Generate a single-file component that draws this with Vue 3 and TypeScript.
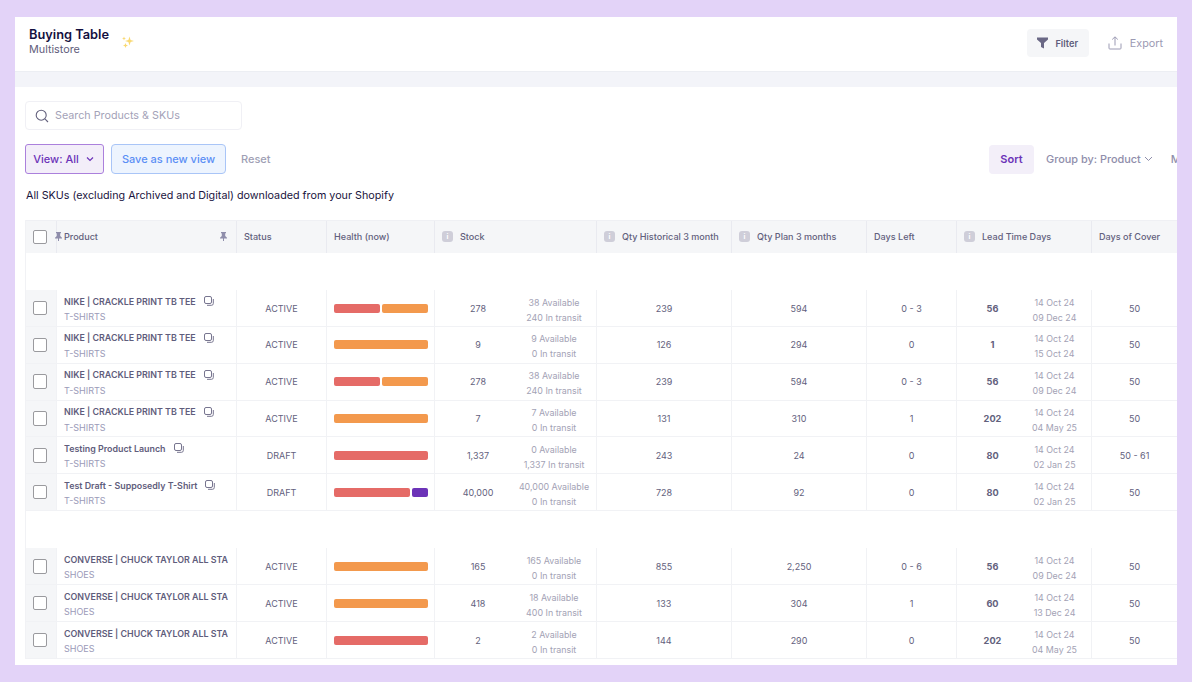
<script setup lang="ts">
interface Row {
  name: string; cat: string; copy: boolean; status: string; bars: { c: string; f: number }[];
  stock: string; avail: string; transit: string; hist: string; plan: string; left: string;
  lead: string; d1: string; d2: string; cover: string;
}
const R = '#e56b67', O = '#f3994d', P = '#6c33b8'
const nike = 'NIKE | CRACKLE PRINT TB TEE'
const conv = 'CONVERSE | CHUCK TAYLOR ALL STA'
const groups: Row[][] = [
  [
    { name: nike, cat: 'T-SHIRTS', copy: true, status: 'ACTIVE', bars: [{ c: R, f: 1 }, { c: O, f: 1 }], stock: '278', avail: '38 Available', transit: '240 In transit', hist: '239', plan: '594', left: '0 - 3', lead: '56', d1: '14 Oct 24', d2: '09 Dec 24', cover: '50' },
    { name: nike, cat: 'T-SHIRTS', copy: true, status: 'ACTIVE', bars: [{ c: O, f: 1 }], stock: '9', avail: '9 Available', transit: '0 In transit', hist: '126', plan: '294', left: '0', lead: '1', d1: '14 Oct 24', d2: '15 Oct 24', cover: '50' },
    { name: nike, cat: 'T-SHIRTS', copy: true, status: 'ACTIVE', bars: [{ c: R, f: 1 }, { c: O, f: 1 }], stock: '278', avail: '38 Available', transit: '240 In transit', hist: '239', plan: '594', left: '0 - 3', lead: '56', d1: '14 Oct 24', d2: '09 Dec 24', cover: '50' },
    { name: nike, cat: 'T-SHIRTS', copy: true, status: 'ACTIVE', bars: [{ c: O, f: 1 }], stock: '7', avail: '7 Available', transit: '0 In transit', hist: '131', plan: '310', left: '1', lead: '202', d1: '14 Oct 24', d2: '04 May 25', cover: '50' },
    { name: 'Testing Product Launch', cat: 'T-SHIRTS', copy: true, status: 'DRAFT', bars: [{ c: R, f: 1 }], stock: '1,337', avail: '0 Available', transit: '1,337 In transit', hist: '243', plan: '24', left: '0', lead: '80', d1: '14 Oct 24', d2: '02 Jan 25', cover: '50 - 61' },
    { name: 'Test Draft - Supposedly T-Shirt', cat: 'T-SHIRTS', copy: true, status: 'DRAFT', bars: [{ c: R, f: 5 }, { c: P, f: 1 }], stock: '40,000', avail: '40,000 Available', transit: '0 In transit', hist: '728', plan: '92', left: '0', lead: '80', d1: '14 Oct 24', d2: '02 Jan 25', cover: '50' },
  ],
  [
    { name: conv, cat: 'SHOES', copy: false, status: 'ACTIVE', bars: [{ c: O, f: 1 }], stock: '165', avail: '165 Available', transit: '0 In transit', hist: '855', plan: '2,250', left: '0 - 6', lead: '56', d1: '14 Oct 24', d2: '09 Dec 24', cover: '50' },
    { name: conv, cat: 'SHOES', copy: false, status: 'ACTIVE', bars: [{ c: O, f: 1 }], stock: '418', avail: '18 Available', transit: '400 In transit', hist: '133', plan: '304', left: '1', lead: '60', d1: '14 Oct 24', d2: '13 Dec 24', cover: '50' },
    { name: conv, cat: 'SHOES', copy: false, status: 'ACTIVE', bars: [{ c: R, f: 1 }], stock: '2', avail: '2 Available', transit: '0 In transit', hist: '144', plan: '290', left: '0', lead: '202', d1: '14 Oct 24', d2: '04 May 25', cover: '50' },
  ],
]
</script>

<template>
  <div class="page">
    <div class="frame">
      <header class="top">
        <div class="title-wrap">
          <div>
            <div class="title">Buying Table</div>
            <div class="subtitle">Multistore</div>
          </div>
          <svg class="sparkle" width="14" height="14" viewBox="0 0 14 14" fill="#f9d973">
            <path d="M8.5 1.500 9.600 4.900 13 6 9.600 7.100 8.500 10.500 7.400 7.100 4 6 7.400 4.900Z" />
            <path d="M3 1.500 3.600 2.900 5 3.500 3.600 4.100 3 5.500 2.400 4.100 1 3.500 2.400 2.900Z" />
            <path d="M4.500 8 5.200 9.800 7 10.500 5.200 11.200 4.500 13 3.800 11.200 2 10.500 3.800 9.800Z" />
          </svg>
        </div>
        <div class="top-actions">
          <button class="filter">
            <svg width="11" height="12" viewBox="0 0 11 12" fill="#6a6885"><path d="M0 .5H11V2.500L7 6V11.500L4 10V6L0 2.500Z" /></svg>
            Filter
          </button>
          <div class="export">
            <svg width="14" height="14" viewBox="0 0 14 14" fill="none" stroke="#9b9ab3" stroke-width="1"><path d="M7 9.500V1M4.200 3.500 7 .8 9.800 3.500M1 7.500V12.200Q1 13 1.800 13H12.200Q13 13 13 12.200V7.500" /></svg>
            Export
          </div>
        </div>
      </header>
      <div class="band"></div>
      <main class="content">
        <div class="search">
          <svg width="14" height="14" viewBox="0 0 14 14" fill="none" stroke="#63617d" stroke-width="1.100"><circle cx="6.200" cy="6.200" r="5" /><path d="M9.900 9.900 13 13" /></svg>
          <span>Search Products &amp; SKUs</span>
        </div>
        <div class="tools">
          <button class="view">View: All
            <svg width="8" height="6" viewBox="0 0 8 6" fill="none" stroke="#6c33b8" stroke-width="1.200"><path d="M1 1.500 4 4.500 7 1.500" /></svg>
          </button>
          <button class="save">Save as new view</button>
          <button class="reset">Reset</button>
          <div class="tools-right">
            <button class="sort">Sort</button>
            <span class="group">Group by: Product
              <svg width="9" height="6" viewBox="0 0 9 6" fill="none" stroke="#8f8eab" stroke-width="1"><path d="M1 1 4.500 4.500 8 1" /></svg>
            </span>
            <span class="more">More</span>
          </div>
        </div>
        <p class="note">All SKUs (excluding Archived and Digital) downloaded from your Shopify</p>
        <div class="table">
          <div class="row head">
            <div class="cell check"><span class="box"></span></div>
            <div class="cell product-head">
              <svg class="pin left-pin" width="7" height="9" viewBox="0 0 7 9" fill="#8f8eab"><path d="M1 0H6V1L5.200 1.500V4L7 5.800V6.500H4V9H3V6.500H0V5.800L1.800 4V1.500L1 1Z" /></svg>
              <span>Product</span>
              <svg class="pin" width="7" height="9" viewBox="0 0 7 9" fill="#8f8eab"><path d="M1 0H6V1L5.200 1.500V4L7 5.800V6.500H4V9H3V6.500H0V5.800L1.800 4V1.500L1 1Z" /></svg>
            </div>
            <div class="cell">Status</div>
            <div class="cell">Health (now)</div>
            <div class="cell"><i class="info">i</i>Stock</div>
            <div class="cell"><i class="info">i</i>Qty Historical 3 month</div>
            <div class="cell"><i class="info">i</i>Qty Plan 3 months</div>
            <div class="cell">Days Left</div>
            <div class="cell"><i class="info">i</i>Lead Time Days</div>
            <div class="cell">Days of Cover</div>
          </div>
          <section v-for="(group, g) in groups" :key="g" class="group-block">
            <div class="row body" v-for="(r, i) in group" :key="i">
              <div class="cell check"><span class="box"></span></div>
              <div class="cell product">
                <div class="name"><span>{{ r.name }}</span>
                  <svg v-if="r.copy" width="10" height="10" viewBox="0 0 10 10" fill="none" stroke="#77758f" stroke-width="1"><rect x="0.500" y="0.500" width="7" height="7" rx="1.500" /><path d="M9.300 3V7.500Q9.300 9.300 7.500 9.300H3" /></svg>
                </div>
                <div class="cat">{{ r.cat }}</div>
              </div>
              <div class="cell status">{{ r.status }}</div>
              <div class="cell health">
                <span v-for="(b, k) in r.bars" :key="k" class="bar" :style="{ background: b.c, flexGrow: b.f }"></span>
              </div>
              <div class="cell stock">
                <span class="stock-num">{{ r.stock }}</span>
                <span class="two-line"><span>{{ r.avail }}</span><span>{{ r.transit }}</span></span>
              </div>
              <div class="cell num">{{ r.hist }}</div>
              <div class="cell num">{{ r.plan }}</div>
              <div class="cell num">{{ r.left }}</div>
              <div class="cell lead">
                <b>{{ r.lead }}</b>
                <span class="two-line"><span>{{ r.d1 }}</span><span>{{ r.d2 }}</span></span>
              </div>
              <div class="cell num">{{ r.cover }}</div>
            </div>
          </section>
        </div>
      </main>
    </div>
  </div>
</template>

<style>
html, body { margin: 0; overflow: hidden; }
</style>

<style scoped>
* { box-sizing: border-box; }
.page {
  width: 1192px; height: 682px; padding: 17px 15px; background: #e3d3f8;
  font-family: Inter, "Noto Sans", sans-serif; color: #1a1540;
}
.frame { width: 1162px; height: 648px; background: #fff; overflow: hidden; }
button { font-family: inherit; border: 0; cursor: pointer; }

.top { height: 55px; display: flex; justify-content: space-between; align-items: center; padding: 0 14px 2px 14px; border-bottom: 1px solid #eceef3; }
.title-wrap { display: flex; align-items: center; gap: 12px; margin-top: -2px; }
.title { font-size: 12.8px; font-weight: 600; line-height: 15px; color: #14103f; }
.subtitle { font-size: 10.8px; line-height: 15px; color: #5f5d7c; }
.sparkle { margin-top: 0; }
.top-actions { display: flex; align-items: center; gap: 19px; }
.filter { height: 28px; width: 62px; border-radius: 4px; background: #f5f6f8; display: flex; align-items: center; justify-content: center; gap: 7px; font-size: 9.2px; font-weight: 600; color: #5f5d7c; padding: 0; }
.export { display: flex; align-items: center; gap: 8px; font-size: 10.8px; color: #9b9ab3; }

.band { height: 15px; background: #f3f4f9; }
.content { padding: 14px 0 0 10px; }
.search { width: 217px; height: 29px; border: 1px solid #f0f0f5; border-radius: 4px; display: flex; align-items: center; gap: 6px; padding-left: 9px; font-size: 10.75px; color: #a3a2b8; }
.tools { display: flex; align-items: center; margin-top: 14px; height: 30px; }
.view { width: 79px; height: 30px; border: 1px solid #ab80dc; border-radius: 3px; background: #f3eef9; color: #6c33b8; font-size: 11px; font-weight: 500; display: flex; align-items: center; justify-content: center; gap: 7px; padding: 0 2px 1px 0; }
.save { width: 115px; height: 30px; margin-left: 7px; border: 1px solid #a9c5f7; border-radius: 4px; background: #edf4fe; color: #5b8ff5; font-size: 11px; font-weight: 500; padding: 0 0 1px; }
.reset { margin-left: 15px; padding: 0 0 1px; background: none; color: #a09fb5; font-size: 11px; font-weight: 500; }
.tools-right { margin-left: auto; display: flex; align-items: center; overflow: hidden; width: 188px; white-space: nowrap; flex: none; }
.sort { flex: none; width: 45px; height: 29px; border-radius: 4px; background: #f3eff9; color: #6c33b8; font-size: 11px; font-weight: 600; padding: 0 0 1px; }
.group { flex: none; margin-left: 12px; padding-bottom: 1px; font-size: 10.9px; font-weight: 500; color: #8f8eab; display: flex; align-items: center; gap: 3px; }
.more { flex: none; margin-left: 18px; padding-bottom: 1px; font-size: 10.9px; font-weight: 500; color: #8f8eab; }
.note { margin: 14px 0 0 1px; font-size: 10.75px; line-height: 15px; color: #1a1540; }

.table { margin: 17px 0 0 0; width: 1152px; border-left: 1px solid #f1f2f5; }
.row { display: grid; grid-template-columns: 31px 180px 90px 108px 162px 135px 135px 90px 135px 85px; }
.head { height: 32.8px; background: #f5f6f8; border-top: 1px solid #eff0f4; font-size: 9.05px; font-weight: 500; color: #63617d; }
.head .cell { display: flex; align-items: center; padding: 0 0 1px 7px; border-right: 1px solid #e9eaf0; white-space: nowrap; }
.head .cell:last-child { border-right: 0; }
.head .check { padding: 0; justify-content: center; }
.product-head { position: relative; }
.product-head span { flex: 1; }
.head .product-head { padding-left: 7px; padding-right: 9px; }
.left-pin { position: absolute; left: -2px; top: 11px; }
.info { width: 11px; height: 11px; border-radius: 3px; background: #cfced9; margin-right: 7px; color: #fff; font-style: normal; font-size: 7px; font-weight: 700; display: flex; align-items: center; justify-content: center; }
.group-block { padding-top: 37.3px; }
.body { height: 36.85px; border-bottom: 1px solid #f1f2f5; font-size: 9px; color: #63617d; }
.body .cell { border-right: 1px solid #f1f2f5; display: flex; align-items: center; white-space: nowrap; min-width: 0; }
.body .cell:last-child { border-right: 0; }
.body .check { background: #f5f6f8; justify-content: center; }
.check { justify-content: center; }
.box { width: 14.5px; height: 14.5px; margin-right: 2px; border: 1.500px solid #9a9a9e; border-radius: 2px; background: #fff; display: block; }
.body .product { display: block; padding: 0 0 0 7px; overflow: hidden; }
.name { margin-top: 3px; height: 16px; line-height: 15px; font-size: 8.9px; font-weight: 600; color: #5f5d7c; display: flex; align-items: center; gap: 8px; }
.cat { height: 15px; line-height: 15px; font-size: 9px; color: #9b9ab8; }
.body .status { justify-content: center; padding-left: 0; }
.body .health { padding: 0 6.5px 0 6.5px; gap: 2px; }
.bar { flex: 1 1 0; height: 9px; border-radius: 2px; display: block; }
.stock-num { width: 86px; text-align: center; }
.two-line { display: flex; flex-direction: column; align-items: center; padding-top: 3px; line-height: 15px; color: #a3a2b5; font-size: 8.9px; }
.stock .two-line { width: 66px; }
.body .num { justify-content: center; }
.lead b { width: 71px; text-align: center; font-weight: 700; font-size: 9.2px; }
.lead .two-line { width: 53px; }
</style>
